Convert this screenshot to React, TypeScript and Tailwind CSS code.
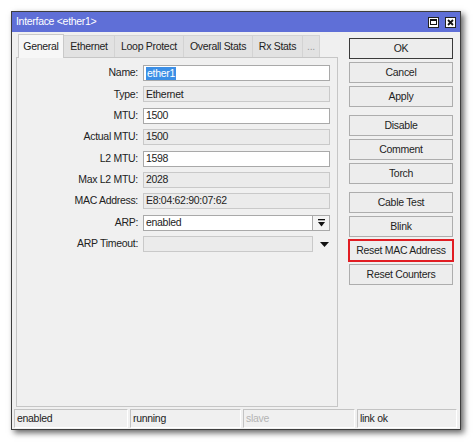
import type { ReactNode } from 'react';

const font = "font-['Liberation_Sans',Arial,sans-serif] text-[10.5px] tracking-[-0.3px]";

const tabs = [
  { label: 'General', w: 'w-[46px]', active: true },
  { label: 'Ethernet', w: 'w-[51px]' },
  { label: 'Loop Protect', w: 'w-[69px]' },
  { label: 'Overall Stats', w: 'w-[69px]' },
  { label: 'Rx Stats', w: 'w-[50px]' },
  { label: '...', w: 'w-[17px]' },
];

type Row = { label: string; value: string; editable?: boolean; selected?: boolean; combo?: 'box' | 'arrow' };

const rows: Row[] = [
  { label: 'Name:', value: 'ether1', editable: true, selected: true },
  { label: 'Type:', value: 'Ethernet' },
  { label: 'MTU:', value: '1500', editable: true },
  { label: 'Actual MTU:', value: '1500' },
  { label: 'L2 MTU:', value: '1598', editable: true },
  { label: 'Max L2 MTU:', value: '2028' },
  { label: 'MAC Address:', value: 'E8:04:62:90:07:62' },
  { label: 'ARP:', value: 'enabled', editable: true, combo: 'box' },
  { label: 'ARP Timeout:', value: '', combo: 'arrow' },
];

const buttonGroups = [
  ['OK', 'Cancel', 'Apply'],
  ['Disable', 'Comment', 'Torch'],
  ['Cable Test', 'Blink', 'Reset MAC Address', 'Reset Counters'],
];

function Field({ row }: { row: Row }) {
  const box = row.editable
    ? 'bg-white border-[#a9a9a9]'
    : 'bg-[#ebebeb] border-[#c9c9c9]';
  return (
    <div className="flex items-center h-[16px]">
      <div className="w-[126px] text-right pr-[5px] text-[#222]">{row.label}</div>
      <div className={`h-[16px] flex items-center pl-[2px] border ${box} ${row.combo ? 'w-[170px]' : 'w-[187px]'}`}>
        {row.selected ? (
          <span className="bg-[#3c8fe6] text-white px-[1px] leading-[13px]">{row.value}</span>
        ) : (
          <span className="text-[#222]">{row.value}</span>
        )}
      </div>
      {row.combo === 'box' && (
        <div className="w-[17px] h-[16px] border border-l-0 border-[#a9a9a9] bg-[#f4f4f4] flex items-center justify-center">
          <svg width="7" height="8" viewBox="0 0 7 8">
            <rect x="0" y="0" width="7" height="1.3" fill="#111" />
            <polygon points="0,3 7,3 3.5,7.5" fill="#111" />
          </svg>
        </div>
      )}
      {row.combo === 'arrow' && (
        <div className="w-[17px] h-[16px] flex items-center justify-end pr-[1px]">
          <svg width="9" height="5" viewBox="0 0 9 5">
            <polygon points="0,0 9,0 4.5,5" fill="#111" />
          </svg>
        </div>
      )}
    </div>
  );
}

function Btn({ children, highlight, primary }: { children: ReactNode; highlight?: boolean; primary?: boolean }) {
  let border = 'border-[#adadad]';
  if (primary) border = 'border-[#3a3a3a]';
  if (highlight) border = 'border-[#e11d23] outline outline-1 outline-[#e11d23]';
  return (
    <div className={`w-[104px] h-[21px] flex items-center justify-center border ${border} bg-[#ededed] text-[#1e1e1e]`}>
      {children}
    </div>
  );
}

export default function App() {
  return (
    <div className={`w-[474px] h-[443px] bg-white pl-[11px] pt-[11px] ${font}`}>
      <div className="w-[450px] h-[419px] border border-[#3e3e3e] bg-[#f0f0f0] shadow-[3px_3px_6px_rgba(0,0,0,0.6)] flex flex-col">
        <div className="h-[20px] bg-[#5f6fd7] flex items-center justify-between pl-[4px] pr-[4px]">
          <span className="text-white">Interface &lt;ether1&gt;</span>
          <div className="flex items-center gap-[6px]">
            <div className="w-[11px] h-[11px] bg-white border border-[#222] flex items-center justify-center">
              <div className="w-[7px] h-[6px] border border-[#111] border-t-2" />
            </div>
            <div className="w-[11px] h-[11px] bg-white border border-[#222] flex items-center justify-center">
              <svg width="7" height="7" viewBox="0 0 7 7">
                <path d="M1 1 L6 6 M6 1 L1 6" stroke="#111" strokeWidth="1.8" />
              </svg>
            </div>
          </div>
        </div>

        <div className="flex h-[375px]">
          <div className="w-[326px] pl-[4px] flex flex-col">
            <div className="h-[25px] flex items-end pl-[2px]">
              {tabs.map((t) =>
                t.active ? (
                  <div
                    key={t.label}
                    className={`${t.w} h-[24px] -mb-px z-10 bg-[#f7f7f7] border border-b-0 border-[#c9c9c9] flex items-center justify-center text-[#222]`}
                  >
                    {t.label}
                  </div>
                ) : (
                  <div
                    key={t.label}
                    className={`${t.w} h-[22px] bg-[#e2e2e2] border-r border-t border-[#d3d3d3] flex items-center justify-center ${t.label === '...' ? 'text-[#9a9a9a]' : 'text-[#222]'}`}
                  >
                    {t.label}
                  </div>
                )
              )}
            </div>
            <div className="flex-1 border border-[#c6c6c6] bg-[#f0f0f0] pt-[7px] flex flex-col gap-[5.4px]">
              {rows.map((r) => (
                <Field key={r.label} row={r} />
              ))}
            </div>
          </div>

          <div className="flex-1 pl-[11px] pt-[6px] flex flex-col gap-[8px]">
            {buttonGroups.map((g, gi) => (
              <div key={gi} className="flex flex-col gap-[3px]">
                {g.map((b) => (
                  <Btn key={b} primary={b === 'OK'} highlight={b === 'Reset MAC Address'}>
                    {b}
                  </Btn>
                ))}
              </div>
            ))}
          </div>
        </div>

        <div className="flex gap-[2px] px-[2px] pt-[2px] h-[21px]">
          <div className="w-[114px] h-[19px] border border-[#c3c3c3] border-r-white border-b-white flex items-center pl-[2px] text-[#222]">enabled</div>
          <div className="w-[111px] h-[19px] border border-[#c3c3c3] border-r-white border-b-white flex items-center pl-[2px] text-[#222]">running</div>
          <div className="w-[112px] h-[19px] border border-[#c3c3c3] border-r-white border-b-white flex items-center pl-[2px] text-[#b4b4b4]">slave</div>
          <div className="w-[100px] h-[19px] border border-[#c3c3c3] border-r-white border-b-white flex items-center pl-[2px] text-[#222]">link ok</div>
        </div>
      </div>
    </div>
  );
}
